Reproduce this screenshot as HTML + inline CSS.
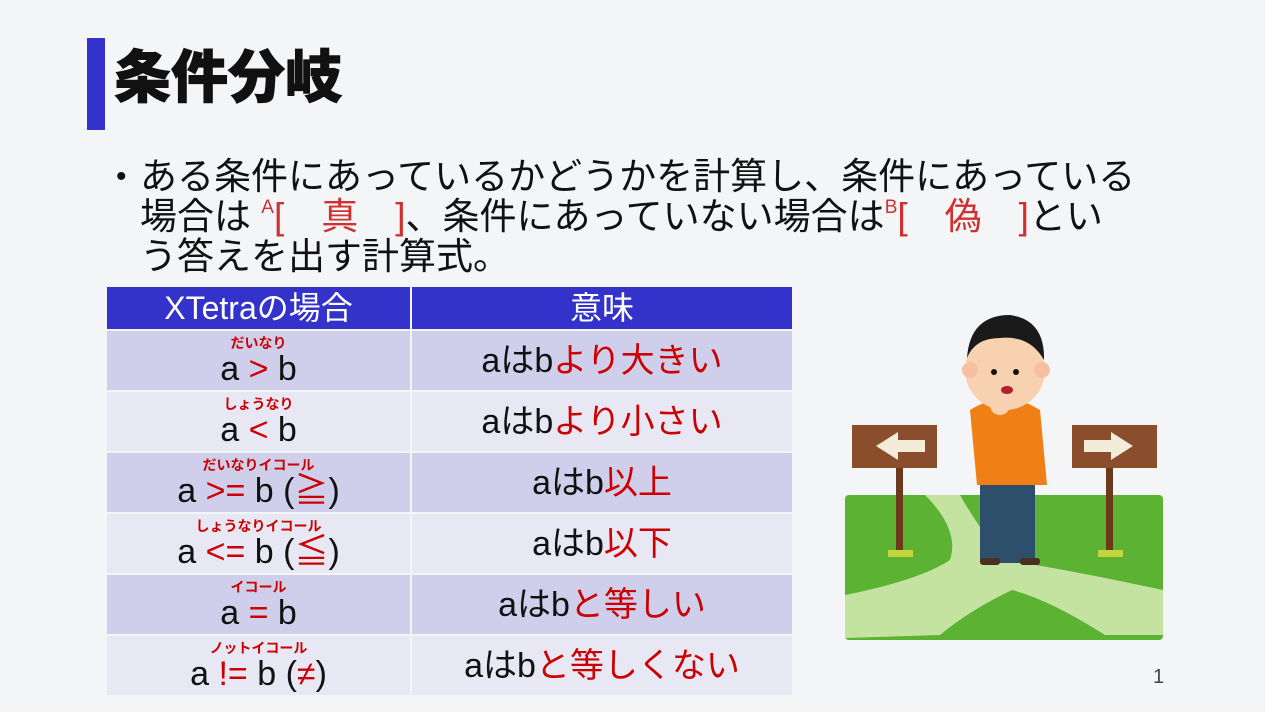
<!DOCTYPE html>
<html><head><meta charset="utf-8"><style>
body{margin:0;width:1265px;height:712px;background:#f4f5f7;position:relative;overflow:hidden;font-family:"Liberation Sans","Noto Sans CJK JP",sans-serif;}
.bar{position:absolute;left:87px;top:38px;width:18px;height:92px;background:#3333cc;}
.title{position:absolute;left:114px;top:40px;font-size:57px;font-weight:900;color:#111;line-height:76px;-webkit-text-stroke:1px #111;}
.bul{position:absolute;left:140px;top:157px;font-size:37px;line-height:40px;color:#111;width:1100px;white-space:nowrap;}
.bul:before{content:"•";position:absolute;left:-24px;top:0;font-size:30px;}
.r{color:#d03030;}
sup{font-size:19px;vertical-align:top;line-height:22px;}
table{position:absolute;left:105px;top:285px;border-collapse:collapse;width:689px;}
td,th{border:2px solid #f4f5f7;text-align:center;padding:0;}
th{background:#3333cc;color:#fff;font-size:32px;font-weight:normal;height:42px;line-height:1;}
td{height:59px;font-size:34px;color:#111;line-height:1;}
tr.o td{background:#cfcfec;} tr.e td{background:#e8e8f5;}
td.l{width:303px;}
.ru{display:block;font-size:14px;font-weight:bold;color:#c00;line-height:15px;margin-bottom:1px;}
.op{color:#c00;}
.num{position:absolute;left:1153px;top:666px;font-size:20px;color:#444;}
</style></head><body>
<div class="bar"></div>
<div class="title">条件分岐</div>
<div class="bul">ある条件にあっているかどうかを計算し、条件にあっている<br>場合は <sup class="r">A</sup><span class="r">[　真　]</span>、条件にあっていない場合は<sup class="r">B</sup><span class="r">[　偽　]</span>とい<br>う答えを出す計算式。</div>
<table>
<tr><th class="l" style="width:303px">XTetraの場合</th><th>意味</th></tr>
<tr class="o"><td class="l"><span class="ru">だいなり</span>a <span class="op">&gt;</span> b</td><td>aはb<span class="op">より大きい</span></td></tr>
<tr class="e"><td class="l"><span class="ru">しょうなり</span>a <span class="op">&lt;</span> b</td><td>aはb<span class="op">より小さい</span></td></tr>
<tr class="o"><td class="l"><span class="ru">だいなりイコール</span>a <span class="op">&gt;=</span> b (<span class="op">≧</span>)</td><td>aはb<span class="op">以上</span></td></tr>
<tr class="e"><td class="l"><span class="ru">しょうなりイコール</span>a <span class="op">&lt;=</span> b (<span class="op">≦</span>)</td><td>aはb<span class="op">以下</span></td></tr>
<tr class="o"><td class="l"><span class="ru">イコール</span>a <span class="op">=</span> b</td><td>aはb<span class="op">と等しい</span></td></tr>
<tr class="e"><td class="l"><span class="ru">ノットイコール</span>a <span class="op">!=</span> b (<span class="op">≠</span>)</td><td>aはb<span class="op">と等しくない</span></td></tr>
</table>
<svg style="position:absolute;left:840px;top:300px" width="330" height="350" viewBox="0 0 330 350">
<rect x="5" y="195" width="318" height="145" rx="4" fill="#5bb233"/>
<path d="M85 195 L120 195 Q140 230 165 260 Q230 270 323 290 L323 335 L265 335 Q210 300 172 290 Q130 310 100 335 L5 338 L5 295 Q80 280 110 260 Q120 230 85 195Z" fill="#c5e3a0"/>
<rect x="56" y="165" width="7" height="85" fill="#6b3a1c"/>
<rect x="266" y="165" width="7" height="85" fill="#6b3a1c"/>
<path d="M48 250 h25 v7 h-25z M258 250 h25 v7 h-25z" fill="#c4d43a"/>
<rect x="12" y="125" width="85" height="43" fill="#8a4e2c"/>
<rect x="232" y="125" width="85" height="43" fill="#8a4e2c"/>
<path d="M36 146 L58 132 L58 140 L85 140 L85 152 L58 152 L58 160Z" fill="#f3ecd8"/>
<path d="M293 146 L271 132 L271 140 L244 140 L244 152 L271 152 L271 160Z" fill="#f3ecd8"/>
<rect x="140" y="183" width="55" height="80" fill="#2d4f6b"/>
<rect x="140" y="258" width="20" height="7" rx="3" fill="#4a3020"/>
<rect x="180" y="258" width="20" height="7" rx="3" fill="#4a3020"/>
<path d="M130 110 Q165 88 200 110 L207 185 L137 185Z" fill="#f07f16"/>
<circle cx="165" cy="70" r="40" fill="#f8d2b0"/>
<circle cx="130" cy="70" r="8" fill="#f8c0a0"/><circle cx="202" cy="70" r="8" fill="#f8c0a0"/>
<path d="M127 58 Q130 15 170 15 Q205 20 204 60 Q190 35 160 38 Q135 38 127 58Z" fill="#1a1a1a"/>
<circle cx="154" cy="72" r="3" fill="#111"/><circle cx="176" cy="72" r="3" fill="#111"/>
<ellipse cx="167" cy="90" rx="6" ry="4" fill="#b02030"/>
<circle cx="160" cy="105" r="10" fill="#f8d2b0"/>
</svg>
<div class="num">1</div>
</body></html>
